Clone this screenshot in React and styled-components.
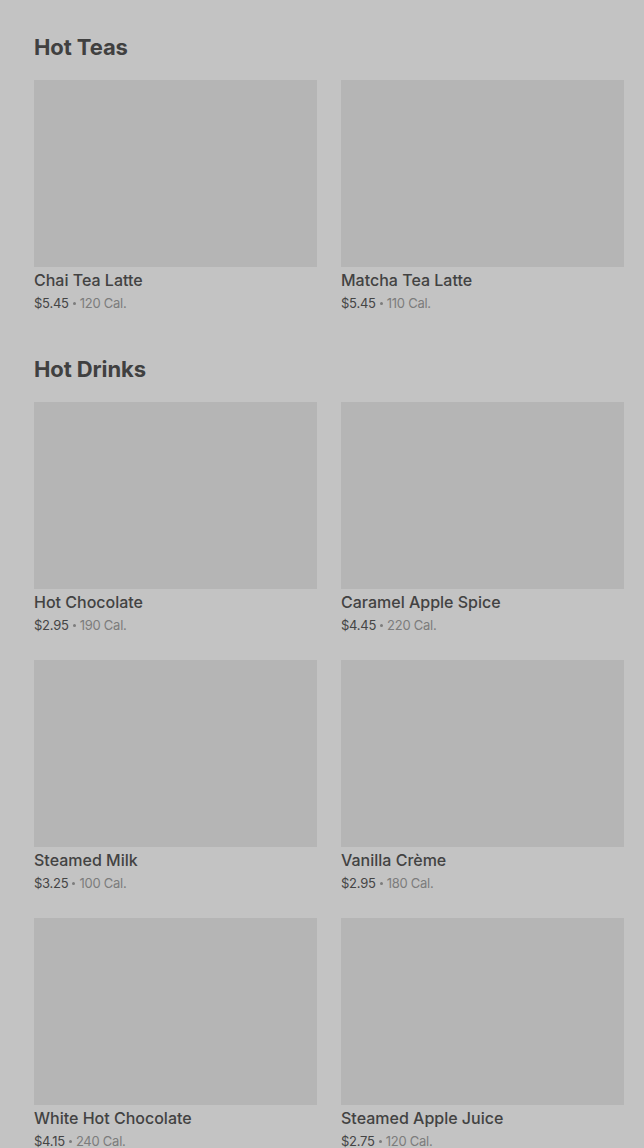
import styled, { createGlobalStyle } from "styled-components";

const GlobalStyle = createGlobalStyle`
  body {
    margin: 0;
    background: #c3c3c3;
    font-family: Inter, "Noto Sans", Arial, sans-serif;
  }
`;

const MENU = [
  {
    title: "Hot Teas",
    items: [
      { name: "Chai Tea Latte", price: "$5.45", cal: "120 Cal." },
      { name: "Matcha Tea Latte", price: "$5.45", cal: "110 Cal." },
    ],
  },
  {
    title: "Hot Drinks",
    items: [
      { name: "Hot Chocolate", price: "$2.95", cal: "190 Cal." },
      { name: "Caramel Apple Spice", price: "$4.45", cal: "220 Cal." },
      { name: "Steamed Milk", price: "$3.25", cal: "100 Cal." },
      { name: "Vanilla Crème", price: "$2.95", cal: "180 Cal." },
      { name: "White Hot Chocolate", price: "$4.15", cal: "240 Cal." },
      { name: "Steamed Apple Juice", price: "$2.75", cal: "120 Cal." },
    ],
  },
];

const Page = styled.main`
  padding: 33px 20px 0 34px;
  display: flex;
  flex-direction: column;
  gap: 43px;
`;

const Section = styled.section`
  display: flex;
  flex-direction: column;
  gap: 19px;
`;

const Heading = styled.h2`
  margin: 0;
  font-size: 22px;
  line-height: 28px;
  font-weight: 700;
  letter-spacing: -0.1px;
  color: #404040;
`;

const Grid = styled.div`
  display: grid;
  grid-template-columns: 1fr 1fr;
  column-gap: 24px;
  row-gap: 26px;
`;

const Card = styled.div`
  display: flex;
  flex-direction: column;
`;

const Thumb = styled.div`
  height: 187px;
  background: #b5b5b5;
`;

const Name = styled.div`
  margin-top: 3px;
  font-size: 16px;
  line-height: 20px;
  font-weight: 500;
  color: #424242;
`;

const Meta = styled.div`
  margin-top: 4px;
  height: 18px;
  display: flex;
  align-items: center;
  gap: 4px;
  font-size: 13px;
  letter-spacing: -0.25px;
  color: #454545;
`;

const Dot = styled.span`
  width: 3px;
  height: 3px;
  border-radius: 50%;
  background: #7c7c7c;
`;

const Cal = styled.span`
  color: #7c7c7c;
`;

export default function App() {
  return (
    <>
      <GlobalStyle />
      <Page>
        {MENU.map((section) => (
          <Section key={section.title}>
            <Heading>{section.title}</Heading>
            <Grid>
              {section.items.map((item) => (
                <Card key={item.name}>
                  <Thumb />
                  <Name>{item.name}</Name>
                  <Meta>
                    <span>{item.price}</span>
                    <Dot />
                    <Cal>{item.cal}</Cal>
                  </Meta>
                </Card>
              ))}
            </Grid>
          </Section>
        ))}
      </Page>
    </>
  );
}
